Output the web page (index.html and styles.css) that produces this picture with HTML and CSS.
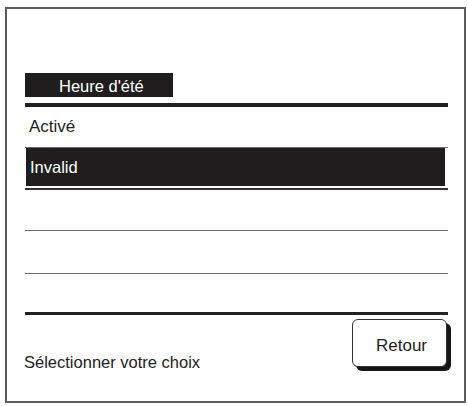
FILE: index.html
```html
<!DOCTYPE html>
<html lang="fr">
<head>
<meta charset="utf-8">
<link rel="stylesheet" href="styles.css">
</head>
<body>
<div class="frame">
  <div class="panel">
    <div class="title">Heure d'été</div>
    <div class="rule-thick"></div>
    <div class="row">Activé</div>
    <div class="rule-thin"></div>
    <div class="row-selected">Invalid</div>
    <div class="rule-mid"></div>
    <div class="row"></div>
    <div class="rule-thin"></div>
    <div class="row row-tall"></div>
    <div class="rule-thin"></div>
    <div class="row row-short"></div>
    <div class="rule-bottom"></div>
    <div class="footer">
      <div class="hint">Sélectionner votre choix</div>
      <div class="button">Retour</div>
    </div>
  </div>
</div>
</body>
</html>
```

FILE: styles.css
```css
html, body {
  margin: 0;
  padding: 0;
  background: #ffffff;
}

body {
  font-family: "Liberation Sans", Arial, sans-serif;
  color: #222222;
  width: 468px;
  height: 406px;
  overflow: hidden;
}

.frame {
  box-sizing: border-box;
  margin: 7px 0 0 5px;
  width: 461px;
  height: 396px;
  border: 2px solid #5c5c5c;
}

.panel {
  padding: 64px 16px 0 18px;
  display: flex;
  flex-direction: column;
}

.title {
  box-sizing: border-box;
  width: 148px;
  height: 24px;
  line-height: 26px;
  padding-left: 34px;
  background: #1f1d1e;
  color: #ffffff;
  font-size: 16.5px;
  margin-bottom: 6px;
}

.rule-thick {
  height: 4px;
  background: #222222;
}

.row {
  height: 40px;
  line-height: 40px;
  padding-left: 4px;
  font-size: 17px;
}

.row-tall {
  height: 42px;
}

.row-short {
  height: 38px;
}

.rule-thin {
  height: 1px;
  background: #6e6e6e;
}

.row-selected {
  box-sizing: border-box;
  height: 38px;
  margin: 0 3px 0 1px;
  padding: 1px 0 0 4px;
  line-height: 37px;
  background: #1f1d1e;
  color: #ffffff;
  font-size: 16.5px;
}

.rule-mid {
  height: 2px;
  margin-top: 2px;
  background: #333333;
}

.rule-bottom {
  height: 3px;
  background: #222222;
}

.footer {
  display: flex;
  justify-content: space-between;
  align-items: flex-end;
  margin-top: 4px;
}

.hint {
  font-size: 16.5px;
  line-height: 20px;
  margin-left: -1px;
  margin-bottom: -1px;
}

.button {
  box-sizing: border-box;
  width: 95px;
  height: 48px;
  margin-right: 1px;
  margin-bottom: 4px;
  padding: 6px 0 0 4px;
  border: 1px solid #333333;
  border-radius: 6px;
  box-shadow: 4px 4px 0 #151515;
  display: flex;
  align-items: center;
  justify-content: center;
  font-size: 17px;
  background: #ffffff;
}
```
